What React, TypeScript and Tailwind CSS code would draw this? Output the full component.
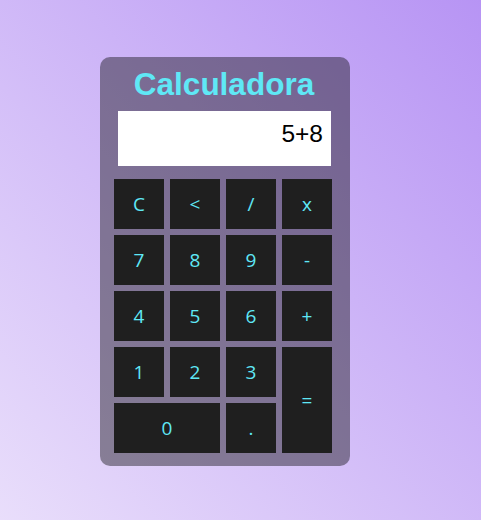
const keys: { label: string; cls?: string }[] = [
  { label: "C" },
  { label: "<" },
  { label: "/" },
  { label: "x" },
  { label: "7" },
  { label: "8" },
  { label: "9" },
  { label: "-" },
  { label: "4" },
  { label: "5" },
  { label: "6" },
  { label: "+" },
  { label: "1" },
  { label: "2" },
  { label: "3" },
  { label: "=", cls: "row-span-2" },
  { label: "0", cls: "col-span-2" },
  { label: "." },
];

export default function App() {
  return (
    <div className="min-h-[520px] w-full bg-[linear-gradient(to_top_right,#e9defb,#b794f4)] pt-[57px] pl-[100px]">
      <div className="w-[250px] rounded-[10px] bg-black/40 pt-[7px] pb-[13px] pl-[14px]">
        <h1 className="h-[40px] pr-[16px] text-center font-['Liberation_Sans',Arial,sans-serif] text-[31.5px] font-bold leading-[40px] text-[#5fe8f6]">
          Calculadora
        </h1>
        <div className="mt-[7px] ml-[4px] h-[55px] w-[213px] bg-white pt-[5px] pr-[8px] text-right font-['Liberation_Sans',Arial,sans-serif] text-[24.5px] text-black">
          5+8
        </div>
        <div className="mt-[13px] grid w-[218px] grid-cols-[repeat(4,50px)] auto-rows-[50px] gap-[6px]">
          {keys.map(k => (
            <button
              key={k.label}
              className={`flex items-center justify-center bg-[#1f1f1f] font-['Open_Sans','Noto_Sans',sans-serif] text-[19px] text-[#5fe8f6] ${k.cls ?? ""}`}
            >
              {k.label}
            </button>
          ))}
        </div>
      </div>
    </div>
  );
}
